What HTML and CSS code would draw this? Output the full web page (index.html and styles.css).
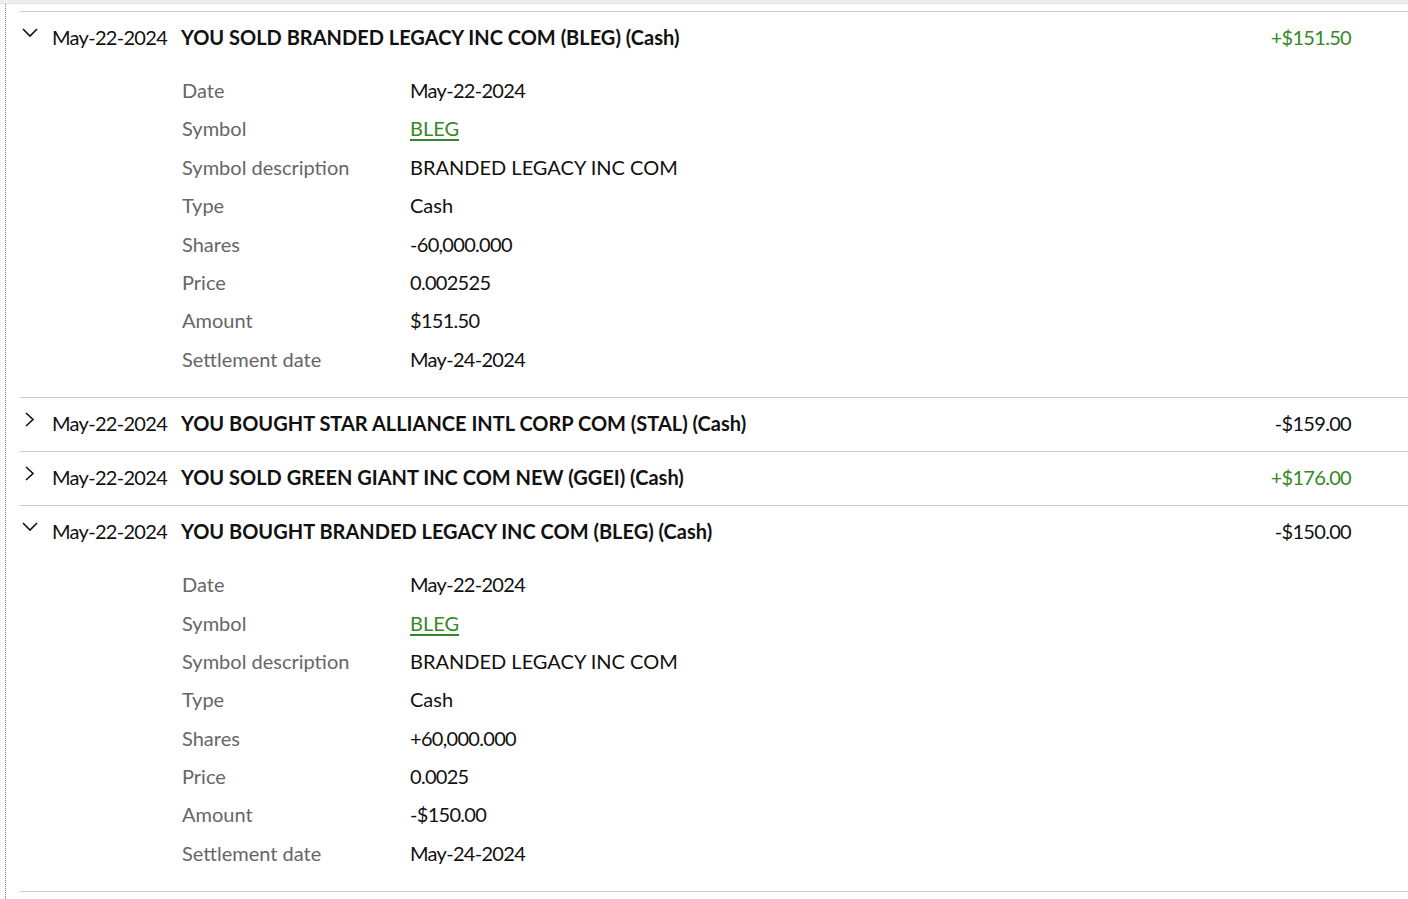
FILE: index.html
```html
<!DOCTYPE html>
<html>
<head>
<meta charset="utf-8">
<link rel="stylesheet" href="styles.css">
</head>
<body>
<div class="topbar"></div>
<div class="panel">
  <div class="item">
    <div class="head">
      <span class="chev"><svg width="16" height="16" viewBox="0 0 16 16"><path d="M1 4 L8 11 L15 4" fill="none" stroke="#111" stroke-width="1.6"/></svg></span>
      <span class="date num">May-22-2024</span>
      <span class="title">YOU SOLD BRANDED LEGACY INC COM (BLEG) (Cash)</span>
      <span class="amt pos num">+$151.50</span>
    </div>
    <div class="details">
      <div class="lbl">Date</div><div class="val num">May-22-2024</div>
      <div class="lbl">Symbol</div><div class="val"><a class="link" href="#">BLEG</a></div>
      <div class="lbl">Symbol description</div><div class="val">BRANDED LEGACY INC COM</div>
      <div class="lbl">Type</div><div class="val">Cash</div>
      <div class="lbl">Shares</div><div class="val num">-60,000.000</div>
      <div class="lbl">Price</div><div class="val num">0.002525</div>
      <div class="lbl">Amount</div><div class="val num">$151.50</div>
      <div class="lbl">Settlement date</div><div class="val num">May-24-2024</div>
    </div>
  </div>
  <div class="item">
    <div class="head">
      <span class="chev"><svg width="16" height="16" viewBox="0 0 16 16"><path d="M4 2 L11 8.5 L4 15" fill="none" stroke="#111" stroke-width="1.6"/></svg></span>
      <span class="date num">May-22-2024</span>
      <span class="title">YOU BOUGHT STAR ALLIANCE INTL CORP COM (STAL) (Cash)</span>
      <span class="amt num">-$159.00</span>
    </div>
  </div>
  <div class="item">
    <div class="head">
      <span class="chev"><svg width="16" height="16" viewBox="0 0 16 16"><path d="M4 2 L11 8.5 L4 15" fill="none" stroke="#111" stroke-width="1.6"/></svg></span>
      <span class="date num">May-22-2024</span>
      <span class="title">YOU SOLD GREEN GIANT INC COM NEW (GGEI) (Cash)</span>
      <span class="amt pos num">+$176.00</span>
    </div>
  </div>
  <div class="item last">
    <div class="head">
      <span class="chev"><svg width="16" height="16" viewBox="0 0 16 16"><path d="M1 4 L8 11 L15 4" fill="none" stroke="#111" stroke-width="1.6"/></svg></span>
      <span class="date num">May-22-2024</span>
      <span class="title">YOU BOUGHT BRANDED LEGACY INC COM (BLEG) (Cash)</span>
      <span class="amt num">-$150.00</span>
    </div>
    <div class="details">
      <div class="lbl">Date</div><div class="val num">May-22-2024</div>
      <div class="lbl">Symbol</div><div class="val"><a class="link" href="#">BLEG</a></div>
      <div class="lbl">Symbol description</div><div class="val">BRANDED LEGACY INC COM</div>
      <div class="lbl">Type</div><div class="val">Cash</div>
      <div class="lbl">Shares</div><div class="val num">+60,000.000</div>
      <div class="lbl">Price</div><div class="val num">0.0025</div>
      <div class="lbl">Amount</div><div class="val num">-$150.00</div>
      <div class="lbl">Settlement date</div><div class="val num">May-24-2024</div>
    </div>
  </div>
</div>
</body>
</html>
```

FILE: styles.css
```css
html, body {
  margin: 0;
  padding: 0;
  background: #fff;
}
body {
  font-family: Lato, "Open Sans", sans-serif;
  color: #111;
  font-size: 20px;
  overflow: hidden;
}
.topbar {
  height: 3px;
  background: #eeeef1;
  border-bottom: 1px solid #e2e2e6;
}
.panel {
  margin-left: 5px;
  border-left: 1px dotted #808080;
  padding-left: 14px;
  padding-top: 7px;
  min-height: 900px;
}
.item {
  border-top: 1px solid #cccccc;
}
.item.last {
  border-bottom: 1px solid #cccccc;
}
.head {
  display: flex;
  align-items: center;
  height: 50px;
  padding-bottom: 3px;
  padding-right: 57px;
}
.chev {
  width: 32px;
  align-self: flex-start;
  padding-top: 13px;
  padding-left: 2px;
  box-sizing: border-box;
  display: flex;
}
.num {
  letter-spacing: -0.7px;
}
.date {
  margin-right: 14px;
}
.title {
  font-weight: bold;
  flex: 1;
}
.amt {
  text-align: right;
}
.amt.pos {
  color: #368727;
}
.details {
  display: grid;
  grid-template-columns: 228px auto;
  padding: 6px 0 19px 162px;
}
.lbl, .val {
  line-height: 38.4px;
  height: 38.4px;
}
.lbl {
  color: #666666;
}
.link {
  color: #368727;
  text-decoration: underline;
  text-underline-offset: 3px;
}
```
